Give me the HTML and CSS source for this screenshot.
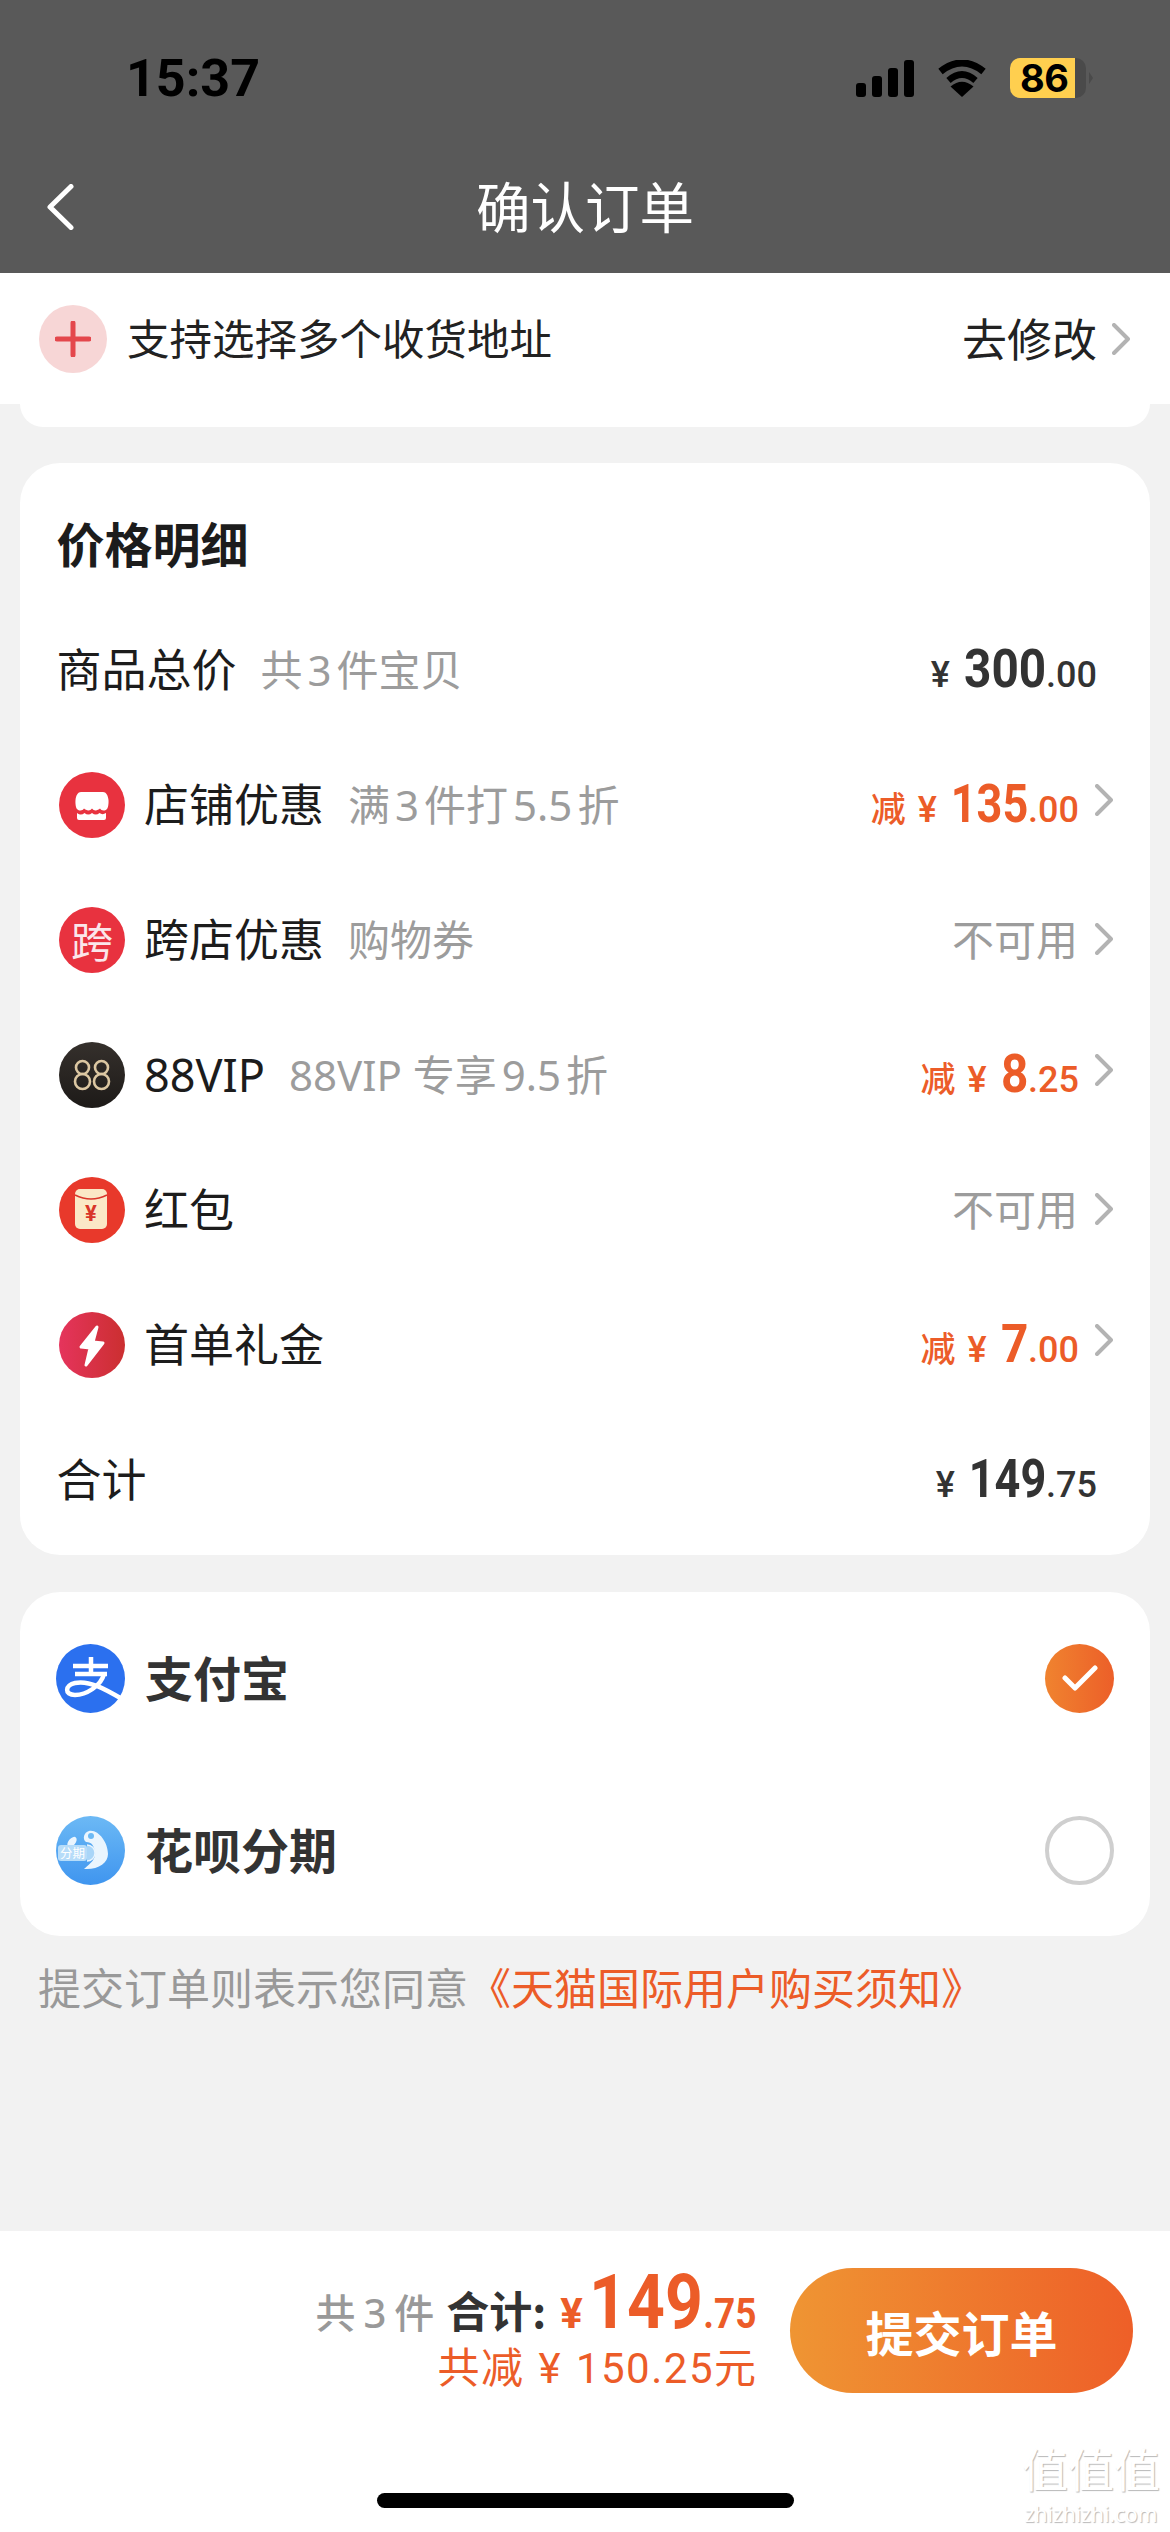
FILE: index.html
```html
<!DOCTYPE html>
<html lang="zh-CN">
<head>
<meta charset="utf-8">
<title>确认订单</title>
<link rel="stylesheet" href="styles.css">
</head>
<body>
<div class="page">
  <header class="topbar">
    <div class="status">
      <span class="time">15:37</span>
      <div class="status-icons">
        <svg class="signal" width="58" height="37" viewBox="0 0 58 37"><rect x="0" y="23" width="10" height="14" rx="3"/><rect x="16" y="16" width="10" height="21" rx="3"/><rect x="32" y="8" width="10" height="29" rx="3"/><rect x="48" y="0" width="10" height="37" rx="3"/></svg>
        <svg class="wifi" width="50" height="37" viewBox="0 0 50 37"><path d="M25 37 13.500 26.500Q25 17 36.500 26.500Z"/><path class="arc" d="M11.500 20.500Q25 8.500 38.500 20.500" stroke-width="6.500"/><path class="arc" d="M3.500 11.500Q25-5.500 46.500 11.500" stroke-width="7"/></svg>
        <div class="battery-wrap"><div class="battery">86</div><i class="battery-cap"></i></div>
      </div>
    </div>
    <nav class="nav">
      <svg class="back" width="28" height="46" viewBox="0 0 28 46"><path d="M25 2.500 4 23l21 20.500"/></svg>
      <h1 class="title">确认订单</h1>
      <span></span>
    </nav>
  </header>

  <section class="address">
    <div class="address-main">
      <span class="add-icon"><svg width="36" height="36" viewBox="0 0 36 36"><path d="M18 2v32M2 18h32"/></svg></span>
      <span class="address-text">支持选择多个收货地址</span>
    </div>
    <div class="address-side">
      <span>去修改</span>
      <svg class="chev" width="18" height="32" viewBox="0 0 18 32"><path d="M2 2l14 14L2 30"/></svg>
    </div>
  </section>
  <div class="address-foot"></div>

  <section class="card price-card">
    <h2 class="price-title">价格明细</h2>

    <div class="row">
      <div class="row-left"><span class="label">商品总价</span><span class="sub">共<b class="n">3</b>件宝贝</span></div>
      <div class="amount no-chev"><span class="yen">¥</span><span class="int d3">300</span><span class="dec">.00</span></div>
    </div>

    <div class="row">
      <div class="row-left">
        <svg class="ico" viewBox="0 0 66 66"><circle cx="33" cy="33" r="33" fill="#e8323f"/><path fill="#fff" d="M22 20h22c3 0 5 3 5.500 8 .3 4-.5 8-1.500 9-3 3-6 1-7-.5-2 2-6 3-8 0-2 3-6 2-8 0-1 1.500-4 3.500-7 .5-1-1-1.800-5-1.500-9C17 23 19 20 22 20z"/><path fill="#fff" d="M18 41c3 2 5 2 7.500 0 2.500 2 5 2 7.500 0 2.500 2 5 2 7.500 0 2 1.500 4 1.500 6.500 0v5a2 2 0 0 1-2 2H20a2 2 0 0 1-2-2z"/></svg>
        <span class="label">店铺优惠</span><span class="sub">满<b class="n">3</b>件打<b class="n">5.5</b>折</span>
      </div>
      <div class="amount off"><span class="minus">减</span><span class="yen">¥</span><span class="int d3 narrow">135</span><span class="dec">.00</span><svg class="chev" width="18" height="32" viewBox="0 0 18 32"><path d="M2 2l14 14L2 30"/></svg></div>
    </div>

    <div class="row">
      <div class="row-left">
        <span class="ico ico-kua">跨</span>
        <span class="label">跨店优惠</span><span class="sub">购物券</span>
      </div>
      <div class="amount na"><span>不可用</span><svg class="chev" width="18" height="32" viewBox="0 0 18 32"><path d="M2 2l14 14L2 30"/></svg></div>
    </div>

    <div class="row">
      <div class="row-left">
        <svg class="ico" viewBox="0 0 66 66"><defs><linearGradient id="dk" x1="0" y1="0" x2="0" y2="1"><stop offset="0" stop-color="#35302c"/><stop offset="1" stop-color="#1d1a18"/></linearGradient></defs><circle cx="33" cy="33" r="33" fill="url(#dk)"/><g fill="none" stroke="#dcc7a2" stroke-width="2.600"><circle cx="23.500" cy="25.500" r="6.500"/><circle cx="23.500" cy="39.500" r="7.500"/><circle cx="42.500" cy="25.500" r="6.500"/><circle cx="42.500" cy="39.500" r="7.500"/></g></svg>
        <span class="label">88VIP</span><span class="sub">88VIP 专享<b class="n">9.5</b>折</span>
      </div>
      <div class="amount off"><span class="minus">减</span><span class="yen">¥</span><span class="int d1">8</span><span class="dec">.25</span><svg class="chev" width="18" height="32" viewBox="0 0 18 32"><path d="M2 2l14 14L2 30"/></svg></div>
    </div>

    <div class="row">
      <div class="row-left">
        <svg class="ico" viewBox="0 0 66 66"><circle cx="33" cy="33" r="33" fill="#e8392b"/><rect x="16" y="12" width="32" height="40" rx="5" fill="#fbe8c6"/><path d="M16 18q16 8 32 0" fill="none" stroke="#d9352a" stroke-width="1.500"/><text x="32" y="44" class="packet-yen">¥</text></svg>
        <span class="label">红包</span>
      </div>
      <div class="amount na"><span>不可用</span><svg class="chev" width="18" height="32" viewBox="0 0 18 32"><path d="M2 2l14 14L2 30"/></svg></div>
    </div>

    <div class="row">
      <div class="row-left">
        <svg class="ico" viewBox="0 0 66 66"><defs><linearGradient id="bolt" x1="0" y1="0" x2="1" y2="0"><stop offset="0" stop-color="#e5345c"/><stop offset="1" stop-color="#cb2f30"/></linearGradient></defs><circle cx="33" cy="33" r="33" fill="url(#bolt)"/><path fill="#fff" stroke="#fff" stroke-width="3" stroke-linejoin="round" d="M38 15 22 35l9 1-4 17 17-22-10-1z"/></svg>
        <span class="label">首单礼金</span>
      </div>
      <div class="amount off"><span class="minus">减</span><span class="yen">¥</span><span class="int d1">7</span><span class="dec">.00</span><svg class="chev" width="18" height="32" viewBox="0 0 18 32"><path d="M2 2l14 14L2 30"/></svg></div>
    </div>

    <div class="row">
      <div class="row-left"><span class="label">合计</span></div>
      <div class="amount no-chev"><span class="yen">¥</span><span class="int d3 narrow">149</span><span class="dec">.75</span></div>
    </div>
  </section>

  <section class="card pay-card">
    <div class="pay-row">
      <div class="pay-left">
        <svg class="pay-ico" viewBox="0 0 69 69"><circle cx="34.500" cy="34.500" r="34.500" fill="#2b70ef"/><g fill="none" stroke="#fff" stroke-width="4.500"><path d="M17 22h35M19 30h32M35 13v17"/><path d="M48 30C45 42 30 51 19 51 8 51 9 41 19 39c14-3 30 6 47 16"/></g></svg>
        <span class="pay-name">支付宝</span>
      </div>
      <span class="radio checked"><svg width="36" height="28" viewBox="0 0 36 28"><path d="M3 14l10 10L33 4"/></svg></span>
    </div>
    <div class="pay-row">
      <div class="pay-left">
        <svg class="pay-ico" viewBox="0 0 69 69"><defs><linearGradient id="hb" x1="0" y1="0" x2="0" y2="1"><stop offset="0" stop-color="#6cb9f5"/><stop offset="1" stop-color="#3f95ef"/></linearGradient></defs><circle cx="34.500" cy="34.500" r="34.500" fill="url(#hb)"/><path fill="#eaf5fe" d="M33 15C42 13 52 26 52 38 52 47 42 54 28 53 35 47 40 43 39 36 38 30 36 26 30 26 26 23 28 16 33 15z"/><circle cx="35" cy="20" r="3" fill="#6cb9f5"/><ellipse cx="16" cy="26" rx="3.500" ry="6" transform="rotate(40 16 26)" fill="#eaf5fe"/><path d="M31 29a8 8 0 0 1 0 16" fill="#a9d5f8" stroke="#eaf5fe" stroke-width="1.500"/><rect x="2" y="29" width="29" height="16" rx="3" fill="#b6dcf9"/><text x="4" y="42" class="hb-text">分期</text></svg>
        <span class="pay-name">花呗分期</span>
      </div>
      <span class="radio"></span>
    </div>
  </section>

  <p class="agree">提交订单则表示您同意<a class="agree-link">《天猫国际用户购买须知》</a></p>

  <div class="spacer"></div>

  <footer class="bottom">
    <div class="bottom-main">
      <div class="summary">
        <div class="summary-top">
          <span class="count">共<b class="n2">3</b>件</span>
          <span class="sum-label">合计:</span>
          <span class="sum-yen">¥</span><span class="sum-int">149</span><span class="sum-dec">.75</span>
        </div>
        <div class="summary-off">共减 ¥ 150.25元</div>
      </div>
      <button class="submit">提交订单</button>
    </div>
    <div class="home"></div>
    <div class="watermark"><div class="wm-cn">值值值</div><div class="wm-en">zhizhizhi.com</div></div>
  </footer>
</div>
</body>
</html>
```

FILE: styles.css
```css
* { box-sizing: border-box; }
html, body { margin: 0; padding: 0; }
body { font-family: "Noto Sans CJK SC", "Noto Sans", sans-serif; color: #1c1c1c; }
.page { position: relative; width: 1170px; height: 2532px; overflow: hidden; display: flex; flex-direction: column; background: #f2f2f2; }

.topbar { height: 273px; background: #595959; flex: none; }
.status { height: 156px; display: flex; align-items: center; justify-content: space-between; padding: 0 77px 0 126px; }
.time { font: 700 52px/1 Roboto, sans-serif; color: #000; padding-top: 1px; }
.status-icons { display: flex; align-items: center; gap: 23px; }
.signal, .wifi { fill: #000; }
.wifi .arc { fill: none; stroke: #000; }
.battery-wrap { display: flex; align-items: center; gap: 3px; }
.battery { width: 76px; height: 40px; border-radius: 10px; background: linear-gradient(90deg, #ffcf4f 65px, #4a4a4a 65px); color: #000; font: 700 38px/40px Inter, sans-serif; padding-left: 10px; letter-spacing: -0.5px; }
.battery-cap { width: 0; height: 0; border-style: solid; border-width: 6px 0 6px 4px; border-color: transparent transparent transparent #4a4a4a; }

.nav { height: 117px; display: grid; grid-template-columns: 1fr auto 1fr; align-items: center; padding: 0 0 15px 46px; }
.back { fill: none; stroke: #fff; stroke-width: 5; stroke-linecap: round; stroke-linejoin: round; }
.title { margin: 0 0 3px; font-size: 54.500px; font-weight: 400; line-height: 1; color: #fff; padding-right: 46px; }

.address { height: 131px; flex: none; background: #fff; display: flex; align-items: center; justify-content: space-between; padding: 0 40px 0 39px; }
.address-main { display: flex; align-items: center; gap: 20px; }
.add-icon { width: 68px; height: 68px; border-radius: 50%; background: #f7d6d6; display: flex; align-items: center; justify-content: center; }
.add-icon path { fill: none; stroke: #e4474c; stroke-width: 5; stroke-linecap: round; }
.address-text { font-size: 42.500px; line-height: 1; color: #222; padding-bottom: 3px; }
.address-side { display: flex; align-items: center; gap: 15px; font-size: 45px; line-height: 1; color: #222; }
.address-side span { padding-bottom: 2px; }
.chev { flex: none; }
.chev path { fill: none; stroke: #b3b3b3; stroke-width: 4; stroke-linecap: round; stroke-linejoin: round; }
.address-foot { height: 23px; flex: none; margin: 0 20px 36px; background: #fff; border-radius: 0 0 28px 28px; }

.card { flex: none; margin: 0 20px; background: #fff; border-radius: 40px; }
.price-card { height: 1092px; padding: 0 37px 0 36.500px; }
.price-title { margin: 0; height: 139px; padding-top: 50px; font-size: 48px; line-height: 58px; font-weight: 700; color: #1c1c1c; }
.row { height: 135px; display: flex; align-items: center; justify-content: space-between; }
.row-left { display: flex; align-items: center; }
.ico { width: 66px; height: 66px; flex: none; margin: 0 19px 0 2.500px; }
.ico-kua { border-radius: 50%; background: #e8323f; color: #fbe6ea; font-size: 42px; line-height: 66px; text-align: center; }
.label { font-size: 45px; line-height: 1; color: #1c1c1c; font-family: "Noto Sans", "Noto Sans CJK SC", sans-serif; }
.sub { font-size: 42px; line-height: 1; color: #9c9c9c; margin-left: 24px; font-family: "Noto Sans", "Noto Sans CJK SC", sans-serif; }
.n { font-weight: 400; margin: 0 5px; }
.packet-yen { font: 700 22px Roboto, sans-serif; fill: #d9352a; text-anchor: middle; }
.hb-text { font: 400 12.500px "Noto Sans CJK SC", sans-serif; fill: #fff; }

.amount { display: flex; align-items: baseline; color: #333; font-family: Roboto, sans-serif; }
.amount.no-chev { margin-right: 16px; }
.amount .yen { font-size: 36px; font-weight: 500; margin-right: 14px; }
.amount .int { display: inline-block; font-size: 53px; font-weight: 700; line-height: 1; transform: scaleX(.9); transform-origin: right center; }
.amount .int.d3 { margin-left: -9px; }
.amount .int.d1 { margin-left: -3px; }
.amount .int.d3.narrow { transform: scaleX(.85); margin-left: -14px; }
.amount .dec { font-size: 36px; font-weight: 500; }
.amount .minus { font: 500 35px "Noto Sans CJK SC", sans-serif; margin-right: 12px; }
.amount .chev { align-self: center; margin-left: 16px; position: relative; top: -5px; }
.amount.off { color: #ec5c28; }
.amount.na { align-items: center; color: #9c9c9c; font: 400 42px/1 "Noto Sans CJK SC", sans-serif; }
.amount.na span { padding-bottom: 3px; }
.amount.na .chev { top: -1px; margin-left: 17px; }

.pay-card { height: 344px; margin-top: 37px; }
.pay-row { height: 172px; display: flex; align-items: center; justify-content: space-between; padding: 0 36px; }
.pay-left { display: flex; align-items: center; gap: 20px; }
.pay-ico { width: 69px; height: 69px; flex: none; }
.pay-name { font-size: 48px; line-height: 1; font-weight: 700; color: #333; padding-bottom: 5px; }
.radio { width: 69px; height: 69px; border-radius: 50%; border: 4px solid #cfcfcf; display: flex; align-items: center; justify-content: center; }
.radio.checked { border: 0; background: linear-gradient(90deg, #f0832f, #ec5f29); }
.radio path { fill: none; stroke: #fff; stroke-width: 5; stroke-linecap: round; stroke-linejoin: round; }

.agree { margin: 20px 0 0; height: 60px; padding-left: 38px; font-size: 43px; line-height: 60px; color: #999; white-space: nowrap; flex: none; }
.agree-link { color: #ec5c28; }
.spacer { flex: 1; }

.bottom { position: relative; flex: none; height: 301px; background: #fff; display: flex; flex-direction: column; padding-top: 37px; }
.bottom-main { display: flex; justify-content: flex-end; align-items: flex-start; gap: 34px; padding-right: 37px; height: 125px; }
.summary { display: flex; flex-direction: column; align-items: flex-end; }
.summary-top { display: flex; align-items: baseline; height: 68px; line-height: 68px; white-space: nowrap; }
.count { font-size: 40px; font-weight: 500; color: #999; margin-right: 12px; }
.n2 { font-family: "Noto Sans", sans-serif; font-weight: 500; margin: 0 8px; }
.sum-label { font-size: 43px; font-weight: 700; color: #333; margin-right: 14px; }
.sum-yen { font: 700 42px Roboto, sans-serif; color: #ec5c28; margin-right: 6px; }
.sum-int { display: inline-block; font: 700 76px/68px Roboto, sans-serif; color: #ec5c28; transform: scaleX(.87); transform-origin: right center; margin-left: -17px; margin-right: -7px; }
.sum-dec { display: inline-block; font: 700 42px/48px Roboto, sans-serif; color: #ec5c28; transform: scaleX(.88); transform-origin: right center; }
.summary-off { font: 400 42px/44px Roboto, "Noto Sans CJK SC", sans-serif; letter-spacing: 1.500px; margin: 11px -1.500px 0 0; color: #ec5c28; word-spacing: 2px; }
.submit { width: 343px; height: 125px; border: 0; padding: 0; border-radius: 63px; background: linear-gradient(90deg, #ef9533, #ee5f28); color: #fff; font-family: inherit; font-size: 48px; font-weight: 700; flex: none; }
.home { width: 417px; height: 15px; border-radius: 8px; background: #000; align-self: center; margin-top: 100px; flex: none; margin-left: 1px; }
.watermark { position: absolute; right: 10px; bottom: 4px; color: #fff; text-align: center; width: 138px; text-shadow: 1px 1px 1px #b8b8b8; }
.wm-cn { font-size: 46px; line-height: 66px; white-space: nowrap; }
.wm-en { font: 400 21px/28px "Noto Sans", sans-serif; }
```
